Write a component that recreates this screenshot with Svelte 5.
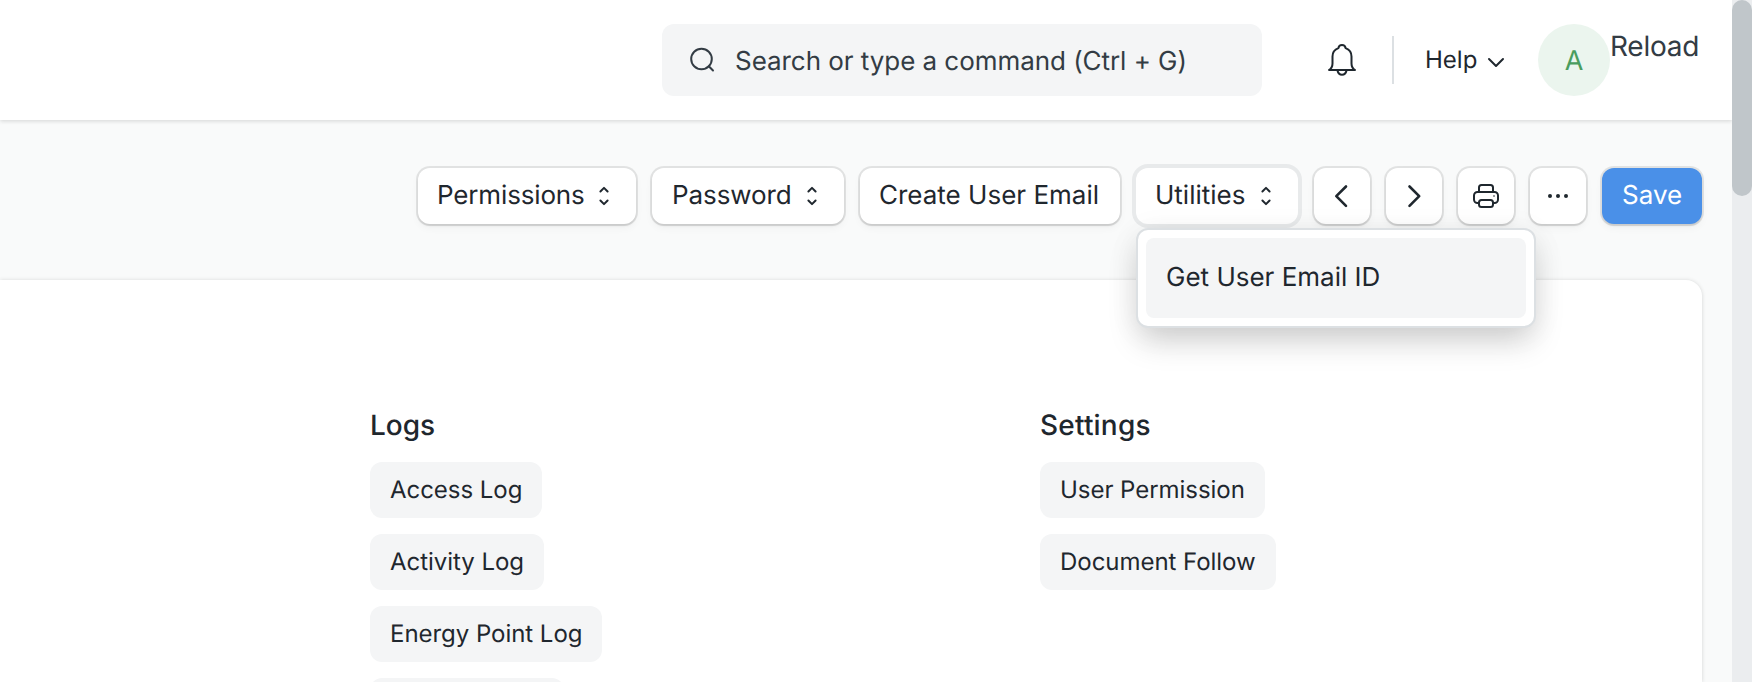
<script>
  const logs = ['Access Log', 'Activity Log', 'Energy Point Log'];
  const settings = ['User Permission', 'Document Follow'];
</script>

{#snippet selectIcon()}
  <svg class="select-icon" width="24" height="24" viewBox="0 0 24 24">
    <path d="M8.400 7.500 12 3.900l3.600 3.600M8.400 16.500l3.600 3.600 3.600-3.600" />
  </svg>
{/snippet}

<div class="window">
  <div class="view">
    <header>
      <div class="search">
        <svg width="32" height="32" viewBox="0 0 32 32">
          <circle cx="15.500" cy="15" r="10.300" />
          <path d="m22.800 22.300 4.200 4.200" />
        </svg>
        <span>Search or type a command (Ctrl + G)</span>
      </div>
      <svg class="bell" width="32" height="36" viewBox="0 0 32 36">
        <path d="M16 3c-1.900 0-3.300 1.200-3.600 3.100C8.800 7.500 6.500 10.600 6.500 14.400v7c0 2.600-.6 4.700-3.500 6.600h26c-2.900-1.900-3.500-4-3.500-6.600v-7c0-3.800-2.300-6.900-5.900-8.300C19.300 4.200 17.900 3 16 3Z" />
        <path d="M11.500 28.500c.5 2.500 2.300 4.300 4.500 4.300s4-1.800 4.500-4.300" />
      </svg>
      <div class="divider"></div>
      <div class="help">
        <span>Help</span>
        <svg width="20" height="20" viewBox="0 0 20 20"><path d="m3 7 7 7 7-7" /></svg>
      </div>
      <div class="avatar">A</div>
      <div class="reload">Reload</div>
    </header>

    <div class="toolbar">
      <button class="permissions"><span>Permissions</span> {@render selectIcon()}</button>
      <button class="password"><span>Password</span> {@render selectIcon()}</button>
      <button class="create"><span>Create User Email</span></button>
      <div class="menu-anchor">
        <button class="open"><span>Utilities</span> {@render selectIcon()}</button>
        <div class="menu"><div class="menu-item">Get User Email ID</div></div>
      </div>
      <button class="icon" aria-label="Previous">
        <svg width="32" height="32" viewBox="0 0 32 32"><path class="bold" d="m20 6.500-9.700 9.700L20 25.900" /></svg>
      </button>
      <button class="icon" aria-label="Next">
        <svg width="32" height="32" viewBox="0 0 32 32"><path class="bold" d="m11.500 6.500 9.700 9.700-9.700 9.700" /></svg>
      </button>
      <button class="icon" aria-label="Print">
        <svg width="32" height="32" viewBox="0 0 32 32">
          <path d="M9 12V7.500A2.500 2.500 0 0 1 11.500 5h9A2.500 2.500 0 0 1 23 7.500V12" />
          <path d="M9 23H7.500A3.500 3.500 0 0 1 4 19.500v-4A3.500 3.500 0 0 1 7.500 12h17a3.500 3.500 0 0 1 3.500 3.500v4a3.500 3.500 0 0 1-3.500 3.500H23" />
          <rect x="9" y="20" width="14" height="7" rx="2.500" />
          <circle class="lamp" cx="24" cy="16" r="1" />
        </svg>
      </button>
      <button class="icon" aria-label="More">
        <svg width="32" height="32" viewBox="0 0 32 32">
          <g class="dots"><circle cx="8" cy="16" r="2" /><circle cx="16" cy="16" r="2" /><circle cx="24" cy="16" r="2" /></g>
        </svg>
      </button>
      <button class="primary"><span>Save</span></button>
    </div>

    <main>
      <section>
        <h2>Logs</h2>
        {#each logs as item}<div class="pill">{item}</div>{/each}
        <div class="pill blank"></div>
      </section>
      <section>
        <h2 class="wide">Settings</h2>
        {#each settings as item}<div class="pill">{item}</div>{/each}
      </section>
    </main>
  </div>
  <div class="track"><div class="thumb"></div></div>
</div>

<style>
  :global(body) { overflow: hidden; }
  .window {
    display: flex;
    width: 1752px;
    height: 682px;
    overflow: hidden;
    background: #f9fafa;
    font-family: Inter, sans-serif;
    font-size: 26px;
    color: #1f272e;
    text-rendering: geometricPrecision;
  }
  .window * { box-sizing: border-box; }
  .view { display: flex; flex-direction: column; width: 1732px; }
  svg { display: block; flex: none; fill: none; stroke: #1f272e; stroke-width: 2; stroke-linecap: round; stroke-linejoin: round; }
  header {
    display: flex;
    flex: none;
    align-items: center;
    height: 120px;
    padding-left: 662px;
    background: #fff;
    box-shadow: 0 1px 4px rgba(0, 0, 0, 0.08), 0 2px 4px rgba(0, 0, 0, 0.06);
    white-space: nowrap;
  }
  .search {
    display: flex;
    align-items: center;
    gap: 17px;
    width: 600px;
    height: 72px;
    padding-left: 24px;
    border-radius: 12px;
    background: #f4f5f6;
    color: #333c44;
    letter-spacing: -0.05px;
  }
  .search span { padding-top: 2px; }
  .search svg { stroke: #333c44; }
  .bell { margin-left: 64px; }
  .divider { width: 2px; height: 48px; margin-left: 34px; background: #dce0e3; }
  .help { display: flex; align-items: center; gap: 9px; width: 113px; margin-left: 31px; font-size: 24px; }
  .help span { margin-top: -1px; }
  .help svg { margin-top: 4px; }
  .avatar {
    display: grid;
    place-items: center;
    width: 72px;
    height: 72px;
    border-radius: 50%;
    background: #ebf5ee;
    color: #4a9d5e;
    font-size: 27px;
  }
  .reload { height: 72px; padding-top: 5px; color: #333c44; font-size: 28px; line-height: 34px; letter-spacing: -0.25px; }
  .toolbar { display: flex; flex: none; justify-content: flex-end; gap: 16px; height: 160px; padding: 48px 30px 0 0; }
  button {
    display: flex;
    flex: none;
    align-items: center;
    height: 56px;
    padding: 0 20px;
    border: 0;
    border-radius: 12px;
    background: #fff;
    box-shadow: 0 0 0 2px rgba(0, 0, 0, 0.09), 0 2px 2px rgba(0, 0, 0, 0.08), 0 4px 8px rgba(0, 0, 0, 0.04);
    color: #1f272e;
    font: inherit;
    text-rendering: inherit;
    white-space: nowrap;
  }
  button span { padding-bottom: 1px; }
  .select-icon { margin-left: auto; }
  .permissions { width: 218px; padding-left: 19px; letter-spacing: -0.15px; }
  .password { width: 192px; letter-spacing: -0.1px; }
  .create { width: 260px; padding: 0 19px; }
  .open { width: 162px; padding-left: 19px; box-shadow: 0 0 0 4px #e8eaeb, 0 2px 2px rgba(0, 0, 0, 0.1); }
  .icon { justify-content: center; width: 56px; padding: 0; }
  .bold { stroke-width: 2.600; }
  .dots, .lamp { fill: #1f272e; stroke: none; }
  .lamp { opacity: 0.6; }
  .primary { width: 100px; background: #4a90e8; color: #fff; }
  .menu-anchor { position: relative; }
  .menu {
    position: absolute;
    z-index: 2;
    top: 60px;
    left: 0;
    width: 400px;
    height: 100px;
    padding: 8px;
    border: 2px solid #dce0e3;
    border-radius: 12px;
    background: #fff;
    box-shadow: 0 16px 32px -4px rgba(0, 0, 0, 0.18), 0 4px 32px rgba(0, 0, 0, 0.06);
  }
  .menu-item { height: 80px; padding-left: 20px; border-radius: 8px; background: #f4f5f6; line-height: 80px; }
  main {
    display: grid;
    flex: none;
    grid-template-columns: 670px 1fr;
    width: 1702px;
    height: 402px;
    padding: 129px 0 0 370px;
    border-top-right-radius: 16px;
    background: #fff;
    box-shadow: 0 0 4px rgba(0, 0, 0, 0.12), 0 2px 4px rgba(0, 0, 0, 0.04);
  }
  section { display: flex; flex-direction: column; align-items: flex-start; gap: 16px; }
  h2 { height: 37px; margin: 0; font-size: 28px; font-weight: 500; line-height: 33px; }
  .wide { letter-spacing: 0.2px; }
  .pill { flex: none; height: 56px; padding: 0 20px; border-radius: 12px; background: #f4f5f6; font-size: 24px; line-height: 55px; letter-spacing: -0.04px; white-space: nowrap; }
  .blank { width: 194px; }
  .track { width: 20px; height: 682px; background: #ebedef; }
  .thumb { height: 196px; border-radius: 10px; background: #c0c6ca; }
</style>
